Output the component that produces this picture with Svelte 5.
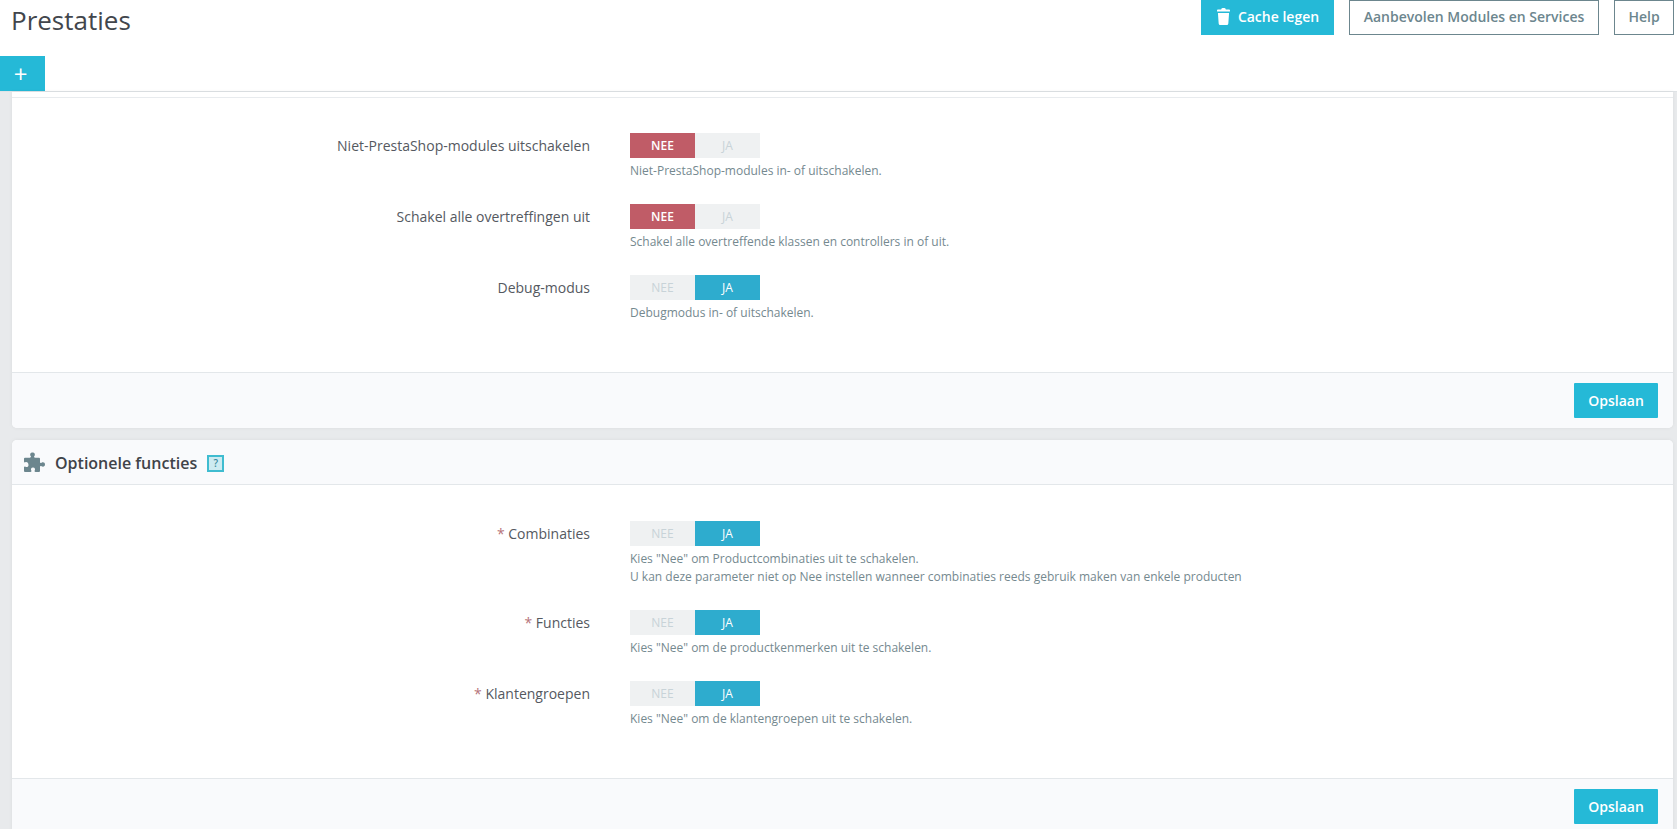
<script>
    const firstRows = [
        { label: 'Niet-PrestaShop-modules uitschakelen', on: false, help: ['Niet-PrestaShop-modules in- of uitschakelen.'] },
        { label: 'Schakel alle overtreffingen uit', on: false, help: ['Schakel alle overtreffende klassen en controllers in of uit.'] },
        { label: 'Debug-modus', on: true, help: ['Debugmodus in- of uitschakelen.'] }
    ];
    const optionRows = [
        {
            label: 'Combinaties',
            required: true,
            on: true,
            help: [
                'Kies "Nee" om Productcombinaties uit te schakelen.',
                'U kan deze parameter niet op Nee instellen wanneer combinaties reeds gebruik maken van enkele producten'
            ]
        },
        { label: 'Functies', required: true, on: true, help: ['Kies "Nee" om de productkenmerken uit te schakelen.'] },
        { label: 'Klantengroepen', required: true, on: true, help: ['Kies "Nee" om de klantengroepen uit te schakelen.'] }
    ];
</script>

{#snippet rows(list)}
    <div class="form">
        {#each list as row}
            <div class="row">
                <div class="label">
                    {#if row.required}<span class="req">*</span>{/if}
                    {row.label}
                </div>
                <div class="field">
                    <div class="switch">
                        <span class={row.on ? 'off' : 'no'}>NEE</span>
                        <span class={row.on ? 'yes' : 'off'}>JA</span>
                    </div>
                    <div class="help">
                        {#each row.help as line}
                            <div>{line}</div>
                        {/each}
                    </div>
                </div>
            </div>
        {/each}
    </div>
    <div class="footer">
        <button class="save">Opslaan</button>
    </div>
{/snippet}

<div class="page">
    <header class="head">
        <div class="top">
            <h1>Prestaties</h1>
            <div class="actions">
                <button class="primary">
                    <svg width="13" height="17" viewBox="0 0 14 17" preserveAspectRatio="none" aria-hidden="true">
                        <path d="M4.500 1.500Q4.500 0 6 0h2q1.500 0 1.500 1.500H13q1 0 1 1v1H0v-1q0-1 1-1zM1 5h12l-.8 10.500q-.1 1.500-1.600 1.500H3.400q-1.500 0-1.600-1.500z" fill="currentColor" />
                    </svg>
                    Cache legen
                </button>
                <button class="outline wide">Aanbevolen Modules en Services</button>
                <button class="outline help-btn">Help</button>
            </div>
        </div>
        <div class="tabs">
            <button class="add">+</button>
        </div>
    </header>

    <main class="content">
        <section class="panel first">
            {@render rows(firstRows)}
        </section>

        <section class="panel">
            <div class="panel-head">
                <svg width="22" height="22" viewBox="0 0 22 22" aria-hidden="true">
                    <path d="M8 4.500C6.500 3 7 .5 9.500.5S12.500 3 11 4.500c0 .8.500 1.200 1.200 1.200H16a1 1 0 0 1 1 1v3.300c0 .8.800 1.300 1.500.8 1.500-1 3.500-.4 3.500 1.700s-2 2.700-3.500 1.700c-.7-.5-1.500 0-1.500.8V19a1 1 0 0 1-1 1h-3.500c-.8 0-1.200-.7-.8-1.400.8-1.400.2-3.100-1.700-3.100s-2.500 1.700-1.700 3.100c.4.700 0 1.400-.8 1.400H2a1 1 0 0 1-1-1v-3.500c0-.8.700-1.200 1.400-.8 1.400.8 3.100.2 3.100-1.700S3.800 9.500 2.400 10.300C1.700 10.700 1 10.300 1 9.500V6.700a1 1 0 0 1 1-1h4.800C7.500 5.700 8 5.300 8 4.500z" fill="#6c868e" />
                </svg>
                <span class="panel-title">Optionele functies</span>
                <span class="hint">?</span>
            </div>
            {@render rows(optionRows)}
        </section>
    </main>
</div>

<style>
    :global(body) {
        background: #fff;
        overflow: hidden;
    }

    .page {
        height: 829px;
        overflow: hidden;
        font-family: "Open Sans", sans-serif;
        background: #e8eaec;
    }

    button {
        font-family: inherit;
        cursor: pointer;
    }

    .head {
        background: #fff;
        border-bottom: 1px solid #dfe3e6;
        height: 91px;
    }

    .top {
        display: flex;
        justify-content: space-between;
        height: 56px;
        padding: 0 3px 0 11px;
    }

    h1 {
        margin: 0;
        font-size: 26px;
        font-weight: 400;
        line-height: 41px;
        color: #42464c;
    }

    .actions {
        display: flex;
        gap: 15px;
        height: 35px;
    }

    .actions button {
        height: 35px;
        font-size: 14px;
        font-weight: 600;
        padding: 0 0 2px;
    }

    .actions .primary {
        width: 133px;
        padding-left: 1px;
        background: #25b9d7;
        color: #fff;
        border: 0;
        display: flex;
        align-items: center;
        justify-content: center;
        gap: 8px;
    }

    .outline {
        background: #fff;
        color: #6c868e;
        border: 1px solid #6c868e;
    }

    .wide {
        width: 250px;
    }

    .help-btn {
        width: 60px;
    }

    .add {
        display: block;
        width: 45px;
        height: 35px;
        border: 0;
        padding: 0 4px 0 0;
        background: #25b9d7;
        color: #fff;
        font-size: 24px;
        line-height: 35px;
    }

    .content {
        padding: 0 4px 0 12px;
    }

    .panel {
        background: #fff;
        border-radius: 5px;
        margin-bottom: 12px;
        overflow: hidden;
        box-shadow: 0 0 4px rgba(0, 0, 0, 0.06);
    }

    .panel.first {
        border-radius: 0 0 5px 5px;
        padding-top: 5px;
    }

    .panel.first .form {
        border-top: 1px solid #e8ebee;
        padding-top: 35px;
    }

    .panel-head {
        height: 45px;
        box-sizing: border-box;
        display: flex;
        align-items: center;
        padding: 2px 0 0 11px;
        background: #f9fafc;
        border-bottom: 1px solid #e3e7ea;
    }

    .panel-title {
        margin-left: 10px;
        font-size: 16px;
        font-weight: 600;
        color: #3f4349;
    }

    .hint {
        margin-left: 10px;
        width: 17px;
        height: 17px;
        box-sizing: border-box;
        border: 2px solid #3fbcd0;
        background: #cdebf1;
        color: #3a8ba0;
        font-size: 10px;
        font-weight: 600;
        line-height: 13px;
        text-align: center;
    }

    .form {
        padding: 36px 0 50px;
    }

    .row {
        display: flex;
        margin-bottom: 24px;
    }

    .row:last-child {
        margin-bottom: 0;
    }

    .label {
        width: 578px;
        padding-top: 3px;
        text-align: right;
        font-size: 14px;
        line-height: 20px;
        color: #55595f;
    }

    .req {
        color: #b5737a;
    }

    .field {
        margin-left: 40px;
    }

    .switch {
        display: flex;
        width: 130px;
        height: 25px;
    }

    .switch span {
        flex: 1;
        text-align: center;
        font-size: 12px;
        font-weight: 600;
        line-height: 25px;
        color: #fff;
    }

    .switch .no {
        background: #c05c67;
    }

    .switch .yes {
        background: #2eacce;
        font-weight: 500;
    }

    .switch .off {
        background: #eff1f2;
        color: #c8d3d8;
        font-weight: 500;
    }

    .help {
        margin-top: 4px;
        font-size: 12px;
        line-height: 18px;
        color: #75898f;
    }

    .footer {
        height: 56px;
        box-sizing: border-box;
        padding: 10px 15px 0 0;
        display: flex;
        justify-content: flex-end;
        align-items: flex-start;
        background: #f9fafc;
        border-top: 1px solid #e3e7ea;
    }

    .save {
        width: 84px;
        height: 35px;
        border: 0;
        border-radius: 1px;
        padding: 0;
        background: #25b9d7;
        color: #fff;
        font-size: 14px;
        font-weight: 600;
    }
</style>
